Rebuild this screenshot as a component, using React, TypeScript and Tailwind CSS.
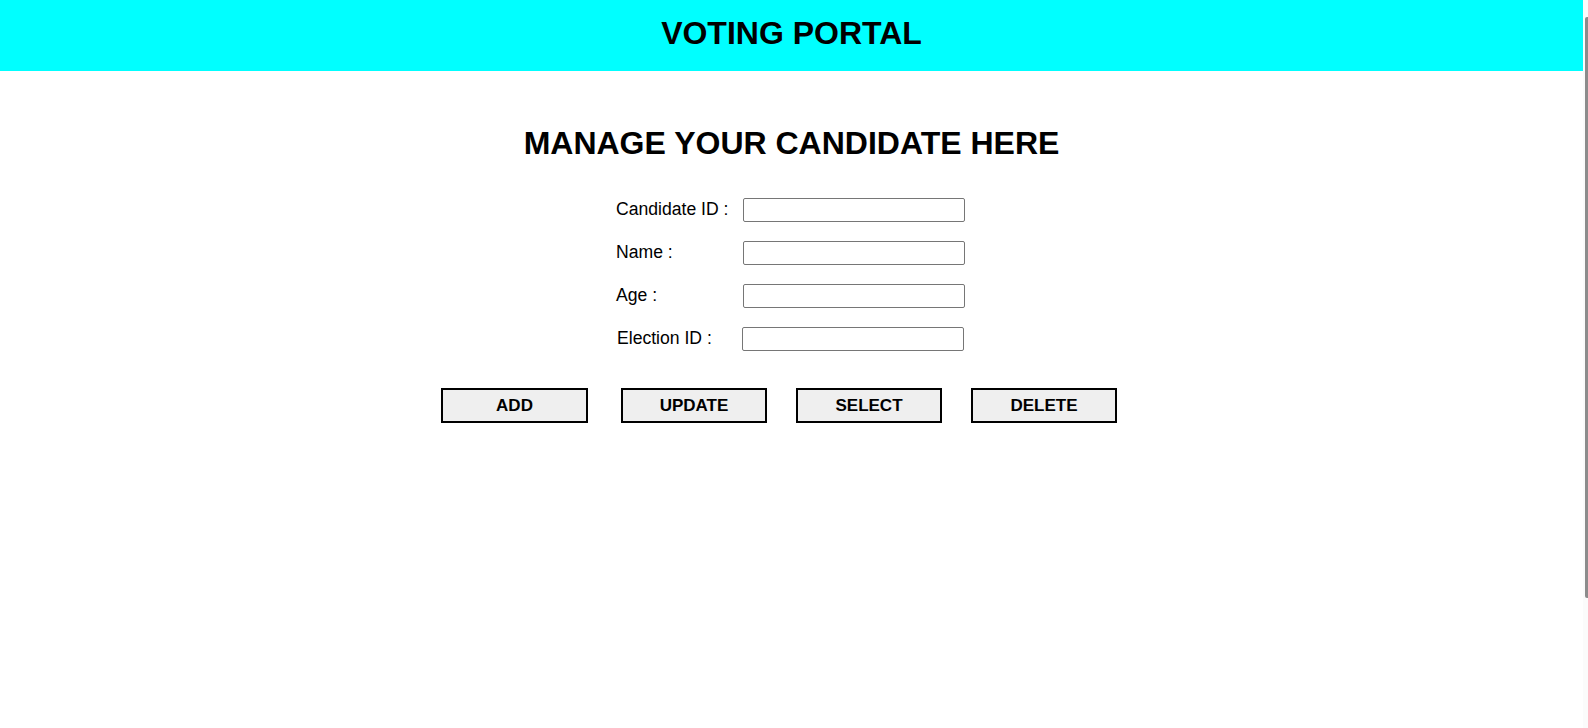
import React from "react";

const fields = [
  { label: "Candidate ID :", shift: false },
  { label: "Name :", shift: false },
  { label: "Age :", shift: false },
  { label: "Election ID :", shift: true },
];

export default function App() {
  return (
    <div className="flex h-[728px] w-full bg-white font-['Liberation_Sans',Arial,sans-serif] text-black">
      <div className="flex-1 flex flex-col">
        <header className="h-[71px] bg-[#00ffff] flex justify-center pt-[15px]">
          <h1 className="text-[32px] leading-[37px] font-bold m-0">VOTING PORTAL</h1>
        </header>
        <main className="flex flex-col items-center">
          <h2 className="mt-[54px] text-[32px] leading-[37px] font-bold">
            MANAGE YOUR CANDIDATE HERE
          </h2>
          <div className="mt-[36px] mr-[2px] grid grid-cols-[127px_222px] auto-rows-[24px] gap-y-[19.1px]">
            {fields.map((f) => (
              <React.Fragment key={f.label}>
                <label
                  className={`flex items-center text-[17.6px] leading-[20px] -mt-[2px] ${
                    f.shift ? "pl-px" : "pl-0"
                  }`}
                >
                  {f.label}
                </label>
                <input
                  type="text"
                  className={`h-[24px] w-[222px] border border-[#767676] rounded-[2px] bg-white px-[2px] text-[13px] outline-none ${
                    f.shift ? "-ml-px" : ""
                  }`}
                />
              </React.Fragment>
            ))}
          </div>
          <div className="mt-[37px] flex mr-[25px]">
            <button className="w-[147px] h-[35px] border-2 border-black bg-[#efefef] text-[17px] font-bold leading-none">
              ADD
            </button>
            <button className="ml-[33px] w-[146px] h-[35px] border-2 border-black bg-[#efefef] text-[17px] font-bold leading-none">
              UPDATE
            </button>
            <button className="ml-[29px] w-[146px] h-[35px] border-2 border-black bg-[#efefef] text-[17px] font-bold leading-none">
              SELECT
            </button>
            <button className="ml-[29px] w-[146px] h-[35px] border-2 border-black bg-[#efefef] text-[17px] font-bold leading-none">
              DELETE
            </button>
          </div>
        </main>
      </div>
      <div className="w-[5px] bg-[#fbfbfb] flex flex-col">
        <div className="ml-[2px] mt-[17px] h-[581px] w-[3px] rounded-l-[2px] bg-[#8c8c8c]" />
      </div>
    </div>
  );
}
